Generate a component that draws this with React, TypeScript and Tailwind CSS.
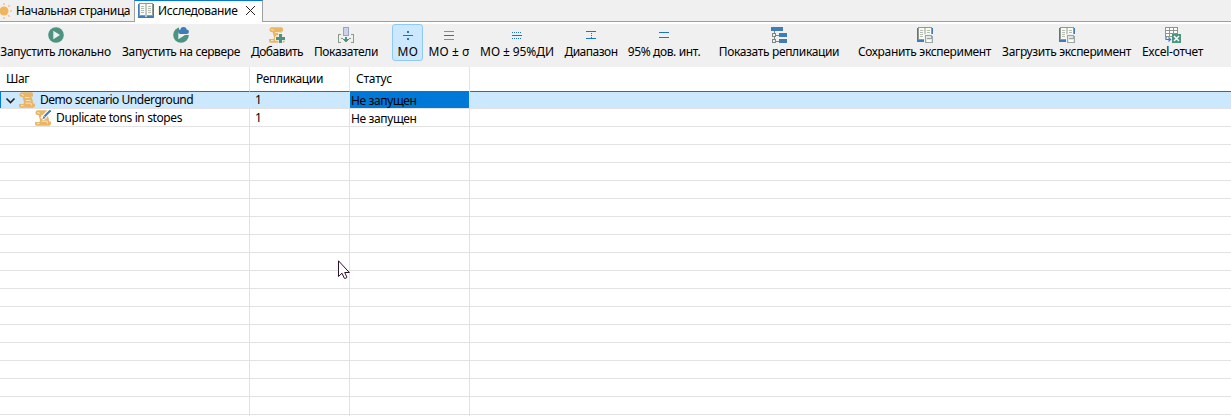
import React from 'react'

const PlayIcon = ({ cloud = false }: { cloud?: boolean }) => (
  <svg className="shrink-0" width="16" height="16" viewBox="0 0 16 16">
    <circle cx="8" cy="8" r="7.8" fill="#4c9480" />
    <path d="M5.300 3.700L12 8l-6.700 4.300z" fill="#f0f0f0" />
    {cloud && (
      <>
        <path d="M6 0h10v8H9.500L6 7z" fill="#f0f0f0" />
        <circle cx="7.300" cy="4.800" r="2.200" fill="#3f7cb8" />
        <circle cx="10.500" cy="3.200" r="3.100" fill="#3f7cb8" />
        <circle cx="13.700" cy="4.700" r="2.200" fill="#3f7cb8" />
        <path d="M7 4h7v3H7z" fill="#3f7cb8" />
      </>
    )}
  </svg>
)

const ScrollIcon = ({ badge }: { badge?: 'plus' | 'pen' }) => (
  <svg className="shrink-0" width="16" height="16" viewBox="0 0 16 16">
    <path
      d="M2.500.300H12.500a1.800 1.800 0 0 1 1.500 1.700v2.500h-1.800l1.600 4 .2 3H16v2a2.300 2.300 0 0 1-2.200 2.300H2.300A2.200 2.200 0 0 1 0 13.500V12h4.500L5 10 3.500 5H2A2.200 2.200 0 0 1 .500 2.500 2.200 2.200 0 0 1 2.500.300z"
      fill="#e9b566"
    />
    <path
      d="M2.200 2.500h1.600l.7 1.500M6 5.500h4.500M7 8.500h4.500M6.500 11.200h5.500l.5 2.300M2 13.500h2.500"
      stroke="#f8e4c2"
      fill="none"
    />
    {badge === 'plus' && (
      <>
        <path d="M11.500 5.500V16M6 11.500h10" stroke="#f0f0f0" strokeWidth="4.500" />
        <path d="M11.500 7v9M7 11.500h9" stroke="#4c9480" strokeWidth="3" />
      </>
    )}
    {badge === 'pen' && (
      <>
        <path d="M16-.500L7 9" stroke="#fff" strokeWidth="4.500" />
        <path d="M15.500.300L9.500 6.500" stroke="#3f7cb8" strokeWidth="2" />
        <path d="M8.500 6l2 2-3 1.200z" fill="#777" />
      </>
    )}
  </svg>
)

const MetricsIcon = () => (
  <svg className="shrink-0" width="16" height="16" viewBox="0 0 16 16" shapeRendering="crispEdges">
    <path
      d="M0 7h3v1H1v7h2v1H0zM13 7h3v9h-3v-1h2V8h-2zM3 11h2v1H3zM11 11h2v1h-2z"
      fill="#8b9a89"
    />
    <path d="M5.500.500h5v8h-5z" fill="#c9d3ea" stroke="#9ba4be" />
    <path d="M7 10h2v2h2v1h-1v1H9v1H7v-1H6v-1H5v-1h2z" fill="#4c9480" />
  </svg>
)

const MeanIcon = () => (
  <svg className="shrink-0" width="16" height="16" viewBox="0 0 16 16" fill="#1a73cf" shapeRendering="crispEdges">
    <path d="M3 8h10v1H3zM7 4h2v2H7zM7 11h2v2H7z" />
  </svg>
)

const SigmaIcon = () => (
  <svg className="shrink-0" width="16" height="16" viewBox="0 0 16 16" shapeRendering="crispEdges">
    <path d="M3 4h10v1H3zM3 12h10v1H3z" fill="#6a93c4" />
    <path d="M3 8h10v1H3z" fill="#1a73cf" />
  </svg>
)

const ConfidenceIcon = () => (
  <svg className="shrink-0" width="16" height="16" viewBox="0 0 16 16" stroke="#1a73cf" shapeRendering="crispEdges">
    <path d="M3 5.500h10M3 11.500h10" strokeDasharray="1 1" />
    <path d="M3 8.500h10" />
  </svg>
)

const RangeIcon = () => (
  <svg className="shrink-0" width="16" height="16" viewBox="0 0 16 16" shapeRendering="crispEdges">
    <path d="M3 4.500h10M3 11.500h10" stroke="#1a73cf" />
    <path d="M8.500 6v5" stroke="#1a73cf" strokeDasharray="1 1" />
  </svg>
)

const IntervalIcon = () => (
  <svg className="shrink-0" width="16" height="16" viewBox="0 0 16 16" shapeRendering="crispEdges">
    <path d="M3 5.500h10M3 10.500h10" stroke="#1a73cf" />
  </svg>
)

const TreeIcon = () => (
  <svg className="shrink-0" width="16" height="16" viewBox="0 0 16 16" shapeRendering="crispEdges">
    <path d="M0 0h12v4H0zM8 6h8v4H8zM8 12h8v4H8z" fill="#3f7cb8" />
    <path d="M3.500 4v3M5 8.500h3M3.500 10v3M5 14.500h3" stroke="#7d8a83" />
    <path d="M1.500 6.500h3v3h-3zM1.500 12.500h3v3h-3z" fill="#f0f0f0" stroke="#7d8a83" />
  </svg>
)

const BookIcon = ({ disk = false }: { disk?: boolean }) => (
  <svg className="shrink-0" width="16" height="16" viewBox="0 0 16 16" shapeRendering="crispEdges">
    <path d="M0 1h16v14H0z" fill="#3f7cb8" />
    <path d="M1 0h14v13H1z" fill="#8f9b8f" />
    <path d="M2 1h5v11H2zM9 1h5v11H9z" fill="#fbfbf6" />
    <path d="M7 1h2v13H7z" fill="#c3cabf" />
    <path
      d="M3 3h3v1H3zM3 5h3v1H3zM3 7h3v1H3zM3 9h3v1H3zM10 3h3v1h-3zM10 5h3v1h-3zM10 7h3v1h-3zM10 9h3v1h-3z"
      fill="#b5bdb2"
    />
    {disk && (
      <>
        <path d="M7 7h9v9H7z" fill="#f0f0f0" />
        <path d="M8 8h7v1h1v7H8z" fill="#9aa7a4" />
        <path d="M9 9h1v3h5v3H9z" fill="#e3e8e5" />
        <path d="M10 9h4v2h-4z" fill="#dfe5e2" />
        <path d="M10 13h4v2h-4z" fill="#fff" />
      </>
    )}
  </svg>
)

const ExcelIcon = () => (
  <svg className="shrink-0" width="16" height="16" viewBox="0 0 16 16">
    <path
      d="M.500.500h12v9H.500zM.500 3.500h12M.500 6.500h12M4.500.500v9M8.500.500v9"
      fill="#fff"
      stroke="#8d958d"
      shapeRendering="crispEdges"
    />
    <path d="M7 7h9v9H7z" fill="#4c9480" />
    <path d="M9 9l5 5M14 9l-5 5" stroke="#fff" strokeWidth="1.500" />
    <path d="M0 10h6v6H0z" fill="#f0f0f0" />
    <path d="M1 9.500v3h4M3.500 10.500l2 2-2 2" stroke="#3f7cb8" strokeWidth="1.200" fill="none" />
  </svg>
)

const SunIcon = () => (
  <svg className="-ml-1 shrink-0" width="16" height="16" viewBox="0 0 16 16">
    <circle cx="8" cy="8" r="4.500" fill="#efb45c" />
    <path
      d="M8 0v2M8 14v2M0 8h2M14 8h2M2.300 2.300l1.500 1.500M12.200 12.200l1.500 1.500M2.300 13.700l1.500-1.500M12.200 3.800l1.500-1.500"
      stroke="#efc487"
      strokeWidth="1.500"
    />
  </svg>
)

const buttons = [
  { label: 'Запустить локально', icon: <PlayIcon />, box: 'h-[38px] w-28 pt-[3px]', text: '-ml-px tracking-[-0.3px]' },
  { label: 'Запустить на сервере', icon: <PlayIcon cloud />, box: 'ml-[9px] h-[38px] w-[120px] pt-[3px]', text: 'tracking-[-0.35px]' },
  { label: 'Добавить', icon: <ScrollIcon badge="plus" />, box: 'ml-2 h-[38px] w-14 pt-[3px]', text: 'tracking-[-0.5px]' },
  { label: 'Показатели', icon: <MetricsIcon />, box: 'ml-2 h-[38px] w-[66px] pt-[3px]', text: 'tracking-[-0.35px]' },
  {
    label: 'МО',
    icon: <MeanIcon />,
    box: 'ml-[13px] h-[37px] w-[31px] rounded-[3px] border border-[#90c8f6] bg-[#cce8ff] pt-0.5 pl-px',
    text: 'tracking-[0.5px]',
  },
  { label: 'МО ± σ', icon: <SigmaIcon />, box: 'ml-[5px] h-[38px] w-[42px] pt-[3px]', text: 'tracking-[0.1px]' },
  { label: 'МО ± 95%ДИ', icon: <ConfidenceIcon />, box: 'ml-2 h-[38px] w-[78px] pt-[3px]', text: 'tracking-[-0.08px]' },
  { label: 'Диапазон', icon: <RangeIcon />, box: 'ml-2 h-[38px] w-[54px] pt-[3px]', text: 'tracking-[-0.5px]' },
  { label: '95% дов. инт.', icon: <IntervalIcon />, box: 'ml-2 h-[38px] w-[76px] pt-[3px]', text: 'tracking-[-0.37px]' },
  { label: 'Показать репликации', icon: <TreeIcon />, box: 'ml-4 h-[38px] w-[122px] pt-[3px]', text: 'tracking-[-0.35px]' },
  { label: 'Сохранить эксперимент', icon: <BookIcon disk />, box: 'ml-[17px] h-[38px] w-[136px] pt-[3px]', text: '-ml-px tracking-[-0.33px]' },
  { label: 'Загрузить эксперимент', icon: <BookIcon disk />, box: 'ml-2 h-[38px] w-[132px] pt-[3px]', text: '-ml-px tracking-[-0.33px]' },
  { label: 'Excel-отчет', icon: <ExcelIcon />, box: 'ml-[7px] h-[38px] w-[66px] pt-[3px]', text: '-ml-px tracking-[-0.25px]' },
]

const Tabs = () => (
  <div className="flex h-[22px] bg-[#f0f0f0]">
    <div className="flex w-[134px] items-center border-b border-[#a0a0a0]">
      <SunIcon />
      <span className="ml-1 tracking-[-0.4px]">Начальная страница</span>
    </div>
    <div className="flex w-[129px] items-center border-x border-t border-x-[#a0a0a0] border-t-[#0078d7] bg-white pb-0.5 pl-[3px]">
      <BookIcon />
      <span className="ml-1 tracking-[-0.35px]">Исследование</span>
      <svg className="ml-2" width="11" height="11" viewBox="0 0 11 11">
        <path d="M1 1l9 9M10 1l-9 9" stroke="#222" />
      </svg>
    </div>
    <div className="flex-1 border-b border-[#a0a0a0]" />
  </div>
)

const Toolbar = () => (
  <div className="mt-0.5 flex h-[43px] bg-[#f0f0f0]">
    {buttons.map((b) => (
      <div key={b.label} className={`flex shrink-0 flex-col items-center ${b.box}`}>
        {b.icon}
        <span className={`leading-[18px] ${b.text}`}>{b.label}</span>
      </div>
    ))}
  </div>
)

const cell = 'shrink-0 border-r border-r-[#e2e2e2]'

const Table = () => (
  <div>
    <div className="flex h-6">
      <div className={`w-[250px] pl-1.5 leading-6 tracking-[-0.4px] ${cell}`}>Шаг</div>
      <div className={`w-[100px] pl-1.5 leading-6 tracking-[-0.35px] ${cell}`}>Репликации</div>
      <div className={`w-[120px] pl-1.5 leading-6 tracking-[-0.2px] ${cell}`}>Статус</div>
    </div>
    <div className="flex h-[18px] border-b border-[#e2e2e2] bg-[#cce8ff]">
      <div className={`flex w-[250px] items-center border-t border-l border-t-[#0078d7] border-l-[#0078d7] pl-1 ${cell}`}>
        <svg width="11" height="7" viewBox="0 0 11 7">
          <path d="M1.500 1.500l4 4 4-4" fill="none" stroke="#222" strokeWidth="1.600" />
        </svg>
        <span className="ml-[3px]">
          <ScrollIcon />
        </span>
        <span className="ml-[5px] leading-4 tracking-[-0.46px]">Demo scenario Underground</span>
      </div>
      <div className={`w-[100px] border-t border-t-[#0078d7] pl-[5px] leading-4 ${cell}`}>1</div>
      <div className={`w-[120px] bg-[#0078d7] pl-px leading-[19px] tracking-[-0.37px] ${cell}`}>Не запущен</div>
      <div className="flex-1 border-t border-[#0078d7]" />
    </div>
    <div className="flex h-[18px] border-b border-[#e2e2e2]">
      <div className={`flex w-[250px] items-center pl-[35px] ${cell}`}>
        <ScrollIcon badge="pen" />
        <span className="ml-[5px] leading-4 tracking-[-0.38px]">Duplicate tons in stopes</span>
      </div>
      <div className={`w-[100px] pl-[5px] leading-[17px] ${cell}`}>1</div>
      <div className={`w-[120px] pl-px leading-[19px] tracking-[-0.37px] ${cell}`}>Не запущен</div>
    </div>
    {Array.from({ length: 17 }, (_, i) => (
      <div key={i} className="flex h-[18px] border-b border-[#e2e2e2]">
        <div className={`w-[250px] ${cell}`} />
        <div className={`w-[100px] ${cell}`} />
        <div className={`w-[120px] ${cell}`} />
      </div>
    ))}
  </div>
)

const App = () => {
  return (
    <div className="relative h-[416px] w-[1231px] overflow-hidden bg-white font-['Noto_Sans',sans-serif] text-[12px] whitespace-nowrap text-black">
      <Tabs />
      <Toolbar />
      <Table />
      <svg className="absolute top-[260px] left-[338px]" width="12" height="20" viewBox="0 0 12 20">
        <path
          d="M.5.8v15.700l3.500-3.300 2.300 5 .8.300 1.600-.8.100-.8-2.100-4.400h4.600z"
          fill="#fff"
          stroke="#2b0f2b"
        />
      </svg>
    </div>
  )
}

export default App
